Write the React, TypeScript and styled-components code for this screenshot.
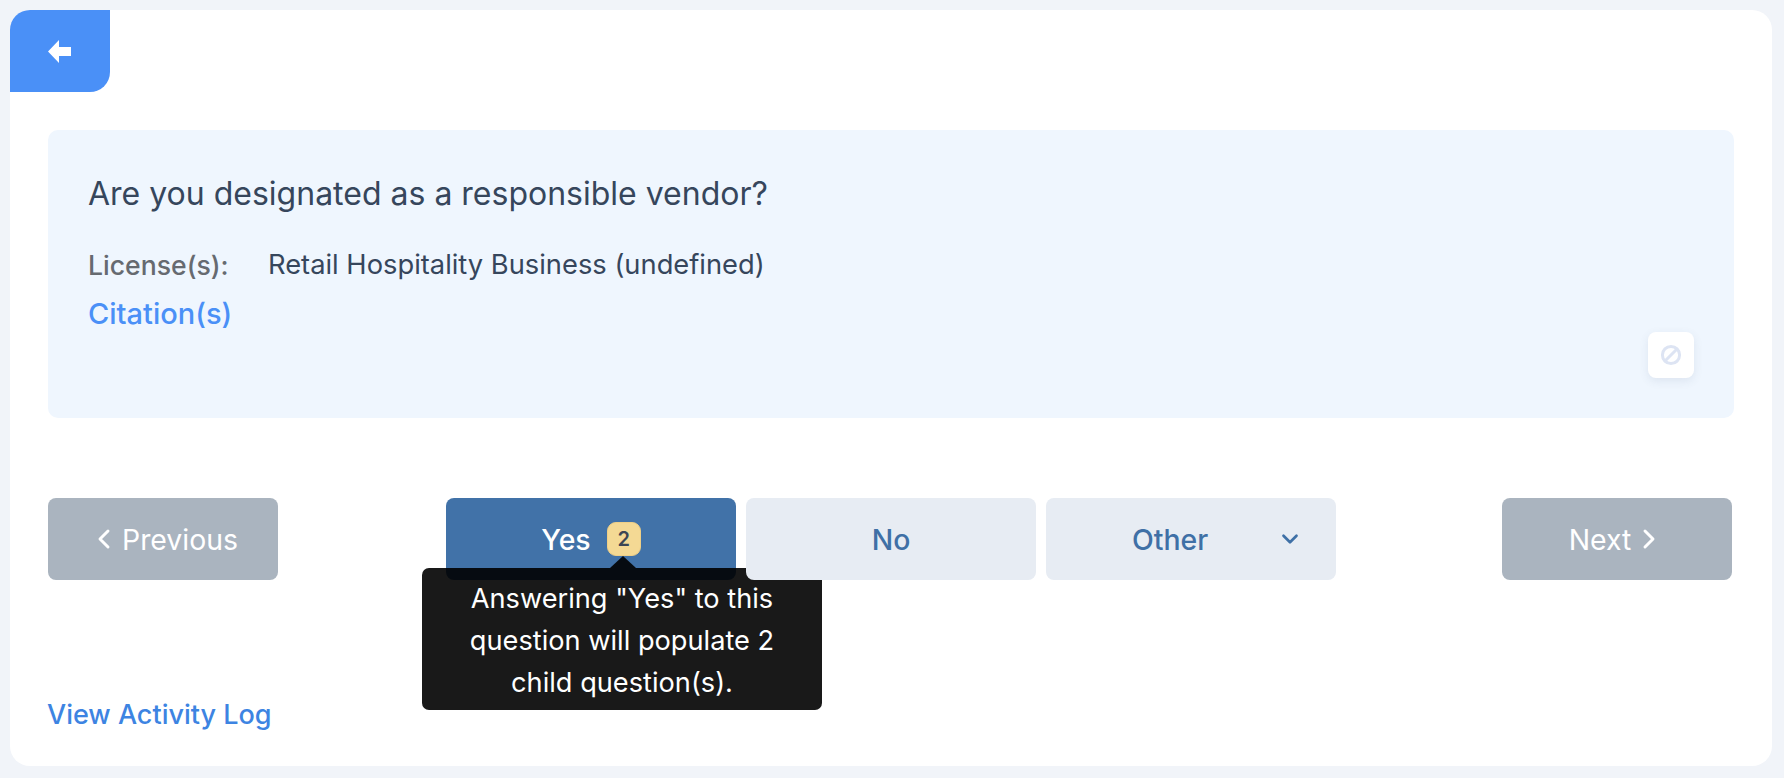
import React from 'react';
import styled, { createGlobalStyle } from 'styled-components';
import { FiChevronDown, FiChevronLeft, FiChevronRight } from 'react-icons/fi';

const GlobalStyle = createGlobalStyle`
  html, body {
    margin: 0;
    padding: 0;
    height: 100%;
    background: #f1f4f9;
    font-family: Inter, "Liberation Sans", sans-serif;
  }
  * { box-sizing: border-box; }
`;

const Page = styled.div`
  height: 778px;
  padding: 10px 12px 12px 10px;
`;

const Card = styled.main`
  height: 100%;
  background: #ffffff;
  border-radius: 20px;
  display: flex;
  flex-direction: column;
  padding: 0 40px 35px 38px;
`;

const BackButton = styled.button`
  width: 100px;
  height: 82px;
  margin-left: -38px;
  flex-shrink: 0;
  border: none;
  border-radius: 20px 0 20px 0;
  background: #4a90f7;
  display: flex;
  align-items: center;
  justify-content: center;
  padding: 0 2px 0 0;
`;

const QuestionPanel = styled.section`
  margin-top: 38px;
  height: 288px;
  margin-right: -2px;
  background: #eff6fe;
  border-radius: 10px;
  padding: 45px 40px 40px 40px;
  display: flex;
  flex-direction: column;
`;

const QuestionText = styled.h1`
  margin: 0;
  font-size: 32px;
  line-height: 38px;
  font-weight: 400;
  color: #36465c;
`;

const LicenseRow = styled.div`
  margin-top: 34px;
  display: flex;
  font-size: 27.3px;
  line-height: 36px;
`;

const LicenseLabel = styled.span`
  width: 180px;
  color: #666a70;
  font-size: 26.6px;
  font-weight: 500;
`;

const LicenseValue = styled.span`
  color: #36465c;
`;

const CitationLink = styled.a`
  margin-top: 13px;
  font-size: 29px;
  line-height: 36px;
  font-weight: 500;
  color: #4a90f7;
`;

const BanButton = styled.button`
  align-self: flex-end;
  width: 46px;
  height: 46px;
  margin-top: auto;
  border: none;
  border-radius: 8px;
  background: #ffffff;
  box-shadow: 0 3px 10px rgba(60, 80, 120, 0.1);
  display: flex;
  align-items: center;
  justify-content: center;
  padding: 0;
`;

const ActionRow = styled.div`
  margin-top: 80px;
  display: flex;
  align-items: flex-start;
  justify-content: space-between;
`;

const NavButton = styled.button`
  width: 230px;
  height: 82px;
  border: none;
  border-radius: 8px;
  background: #aab4bf;
  color: #ffffff;
  font-family: inherit;
  font-size: 28.4px;
  display: flex;
  align-items: center;
  justify-content: center;
  gap: 2px;
  padding: 0;
`;

const AnswerGroup = styled.div`
  display: flex;
  gap: 10px;
  margin-left: 2px;
`;

const AnswerSlot = styled.div`
  position: relative;
`;

const AnswerButton = styled.button<{ $active?: boolean }>`
  width: 290px;
  height: 82px;
  border: none;
  border-radius: 8px;
  background: ${({ $active }) => ($active ? '#4172a8' : '#e7ecf3')};
  color: ${({ $active }) => ($active ? '#ffffff' : '#3f70a6')};
  font-family: inherit;
  font-size: 28.4px;
  font-weight: 500;
  display: flex;
  align-items: center;
  justify-content: center;
  padding: 0;
`;

const DropdownButton = styled(AnswerButton)`
  justify-content: space-between;
  padding: 0 33px 0 86px;
`;

const Badge = styled.span`
  width: 34px;
  height: 34px;
  margin-left: 16px;
  border-radius: 9px;
  border: 1px solid #efcf86;
  background: #f4d994;
  color: #3c4654;
  font-size: 20px;
  font-weight: 600;
  display: flex;
  align-items: center;
  justify-content: center;
`;

const Tooltip = styled.div`
  position: absolute;
  top: 70px;
  left: -24px;
  width: 400px;
  height: 142px;
  padding: 10px 30px 0;
  border-radius: 7px;
  background: rgba(0, 0, 0, 0.9);
  color: #ffffff;
  font-size: 27.2px;
  line-height: 42px;
  text-align: center;

  &::before {
    content: '';
    position: absolute;
    top: -12px;
    left: 188px;
    border-left: 13px solid transparent;
    border-right: 13px solid transparent;
    border-bottom: 12px solid rgba(0, 0, 0, 0.9);
  }
`;

const ActivityLink = styled.a`
  margin-top: auto;
  margin-left: -1px;
  font-size: 27px;
  line-height: 32px;
  font-weight: 500;
  color: #3d84e2;
`;

export default function App() {
  return (
    <Page>
      <GlobalStyle />
      <Card>
        <BackButton aria-label="Back">
          <svg width="23" height="23" viewBox="0 0 23 23" fill="#ffffff">
            <path d="M0 11.5 L11 0 V7 H23 V16 H11 V23 Z" />
          </svg>
        </BackButton>
        <QuestionPanel>
          <QuestionText>Are you designated as a responsible vendor?</QuestionText>
          <LicenseRow>
            <LicenseLabel>License(s):</LicenseLabel>
            <LicenseValue>Retail Hospitality Business (undefined)</LicenseValue>
          </LicenseRow>
          <CitationLink>Citation(s)</CitationLink>
          <BanButton aria-label="Not applicable">
            <svg width="22" height="22" viewBox="0 0 22 22" fill="none" stroke="#dde4f3" strokeWidth="3">
              <circle cx="11" cy="11" r="8.6" />
              <path d="M5 17 L17 5" />
            </svg>
          </BanButton>
        </QuestionPanel>
        <ActionRow>
          <NavButton>
            <FiChevronLeft size={32} strokeWidth={2.2} />
            Previous
          </NavButton>
          <AnswerGroup>
            <AnswerSlot>
              <AnswerButton $active>
                Yes
                <Badge>2</Badge>
              </AnswerButton>
              <Tooltip>Answering "Yes" to this question will populate 2 child question(s).</Tooltip>
            </AnswerSlot>
            <AnswerSlot>
              <AnswerButton>No</AnswerButton>
            </AnswerSlot>
            <AnswerSlot>
              <DropdownButton>
                Other
                <FiChevronDown size={26} strokeWidth={2.5} />
              </DropdownButton>
            </AnswerSlot>
          </AnswerGroup>
          <NavButton>
            Next
            <FiChevronRight size={32} strokeWidth={2.2} />
          </NavButton>
        </ActionRow>
        <ActivityLink>View Activity Log</ActivityLink>
      </Card>
    </Page>
  );
}
